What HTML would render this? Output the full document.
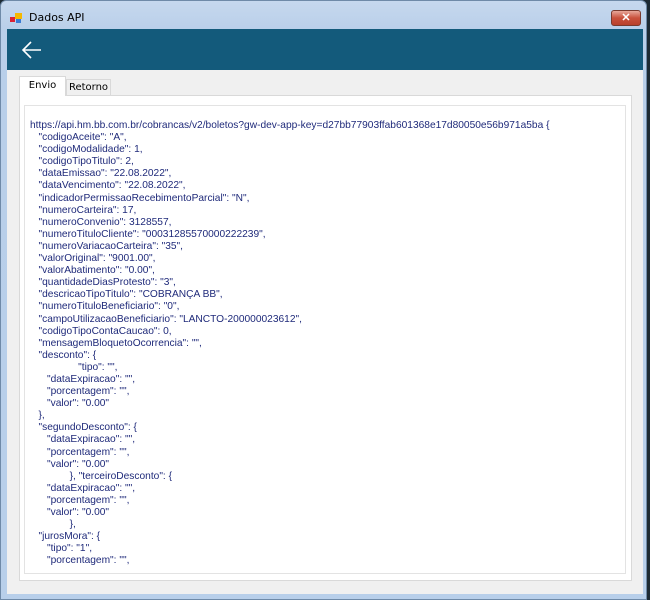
<!DOCTYPE html>
<html><head><meta charset="utf-8"><style>
*{margin:0;padding:0;box-sizing:border-box}
body{width:650px;height:600px;overflow:hidden;background:#1d2a33;font-family:"Liberation Sans",sans-serif;position:relative}
.win{position:absolute;left:0;top:0;width:647px;height:600px;background:linear-gradient(#c6d8ee,#b9cfe9 30px,#b8cfea);border-radius:6px 6px 0 0;border:1px solid #6f8aa8}
.title{position:absolute;left:28px;top:10px;color:#000;font-family:"DejaVu Sans","Liberation Sans",sans-serif;font-size:11px}
.icon{position:absolute;left:9px;top:12px;width:12px;height:10px}
.close{position:absolute;left:610px;top:9px;width:30px;height:16px;border:1px solid #7a3a2e;border-radius:3px;background:linear-gradient(#e8a89a,#c9513c 50%,#b8402c);color:#fff;font-size:11px;font-weight:bold;text-align:center;line-height:14px}
.client{position:absolute;left:6px;top:28px;width:636px;height:565px;background:#f0f0f0}
.head{position:absolute;left:0;top:0;width:636px;height:41px;background:#135a7b}
.tab{position:absolute;color:#000;text-align:center;font-family:"DejaVu Sans","Liberation Sans",sans-serif;font-size:10px}
.t1{left:12px;top:47px;width:47px;height:20px;background:#fff;border:1px solid #d9d9d9;border-bottom:none;line-height:18px;z-index:2}
.t2{left:59px;top:50px;width:45px;height:17px;background:#f0f0f0;border:1px solid #d9d9d9;border-bottom:none;line-height:16px}
.panel{position:absolute;left:12px;top:66px;width:613px;height:486px;background:#fff;border:1px solid #d9d9d9}
.box{position:absolute;left:4px;top:9px;width:602px;height:469px;border:1px solid #e3e3e3}
pre{position:absolute;left:10px;top:24px;font-family:"Liberation Sans",sans-serif;font-size:10.2px;line-height:12.1px;color:#1f2a7a;white-space:pre}
</style></head><body>
<div class="win">
<svg class="icon" viewBox="0 0 12 10"><rect x="0" y="4" width="5" height="5" fill="#d23"/><rect x="5" y="0" width="7" height="6" fill="#f5b800"/><rect x="6" y="6" width="5" height="4" fill="#3a7bd5"/></svg>
<div class="title">Dados API</div>
<div class="close">✕</div>
<div class="client">
<div class="head"><svg style="position:absolute;left:14px;top:11px" width="22" height="20" viewBox="0 0 22 20"><path d="M20 10H2M10 2L2 10L10 18" stroke="#fff" stroke-width="1.6" fill="none"/></svg></div>
<div class="tab t1">Envio</div>
<div class="tab t2">Retorno</div>
<div class="panel"><div class="box"></div>
<pre>https://api.hm.bb.com.br/cobrancas/v2/boletos?gw-dev-app-key=d27bb77903ffab601368e17d80050e56b971a5ba {
   "codigoAceite": "A",
   "codigoModalidade": 1,
   "codigoTipoTitulo": 2,
   "dataEmissao": "22.08.2022",
   "dataVencimento": "22.08.2022",
   "indicadorPermissaoRecebimentoParcial": "N",
   "numeroCarteira": 17,
   "numeroConvenio": 3128557,
   "numeroTituloCliente": "00031285570000222239",
   "numeroVariacaoCarteira": "35",
   "valorOriginal": "9001.00",
   "valorAbatimento": "0.00",
   "quantidadeDiasProtesto": "3",
   "descricaoTipoTitulo": "COBRANÇA BB",
   "numeroTituloBeneficiario": "0",
   "campoUtilizacaoBeneficiario": "LANCTO-200000023612",
   "codigoTipoContaCaucao": 0,
   "mensagemBloquetoOcorrencia": "",
   "desconto": {
                 "tipo": "",
      "dataExpiracao": "",
      "porcentagem": "",
      "valor": "0.00"
   },
   "segundoDesconto": {
      "dataExpiracao": "",
      "porcentagem": "",
      "valor": "0.00"
              }, "terceiroDesconto": {
      "dataExpiracao": "",
      "porcentagem": "",
      "valor": "0.00"
              },
   "jurosMora": {
      "tipo": "1",
      "porcentagem": "",</pre>
</div>
</div>
</div>
</body></html>
